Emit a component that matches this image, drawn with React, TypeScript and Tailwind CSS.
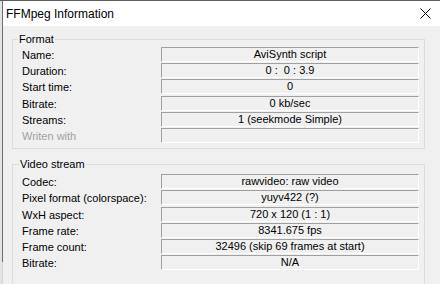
import React from "react";

type Row = { label: string; value: string; disabled?: boolean };

const formatRows: Row[] = [
  { label: "Name:", value: "AviSynth script" },
  { label: "Duration:", value: "0 :  0 : 3.9" },
  { label: "Start time:", value: "0" },
  { label: "Bitrate:", value: "0 kb/sec" },
  { label: "Streams:", value: "1 (seekmode Simple)" },
  { label: "Writen with", value: "", disabled: true },
];

const videoRows: Row[] = [
  { label: "Codec:", value: "rawvideo: raw video" },
  { label: "Pixel format (colorspace):", value: "yuyv422 (?)" },
  { label: "WxH aspect:", value: "720 x 120 (1 : 1)" },
  { label: "Frame rate:", value: "8341.675 fps" },
  { label: "Frame count:", value: "32496 (skip 69 frames at start)" },
  { label: "Bitrate:", value: "N/A" },
];

function InfoRow({ row }: { row: Row }) {
  return (
    <div className="flex h-[16.2px] items-start">
      <div
        className={
          "w-[139px] pt-[1px] leading-[15px] whitespace-nowrap " +
          (row.disabled ? "text-[#a0a0a0]" : "text-black")
        }
      >
        {row.label}
      </div>
      <div className="flex h-[15px] w-[258px] items-center justify-center border-t border-l border-b border-r border-t-[#a0a0a0] border-l-[#a0a0a0] border-b-white border-r-white leading-[13px] text-black whitespace-pre">
        {row.value}
      </div>
    </div>
  );
}

function Group({
  title,
  rows,
  className,
  legendClass,
}: {
  title: string;
  rows: Row[];
  className: string;
  legendClass: string;
}) {
  return (
    <div className={"relative border border-[#dcdcdc] pl-[9px] pr-[5px] " + className}>
      <span
        className={
          "absolute top-[-7px] bg-[#f0f0f0] px-[1px] leading-[13px] text-black " + legendClass
        }
      >
        {title}
      </span>
      <div className="flex flex-col">
        {rows.map((r, i) => (
          <InfoRow key={i} row={r} />
        ))}
      </div>
    </div>
  );
}

export default function App() {
  return (
    <div
      className="flex h-[284px] w-[440px] flex-col overflow-hidden bg-[#f0f0f0] text-[11px]"
      style={{ fontFamily: '"Liberation Sans", Arial, sans-serif' }}
    >
      <div className="h-[1px] w-full shrink-0 bg-[#5f5f5f]" />
      <div className="flex min-h-0 flex-1">
        <div className="w-[2px] shrink-0 bg-[#e4e4e4]" />
        <div className="flex w-[1px] shrink-0 flex-col">
          <div className="h-[261px] bg-[#6d6d6d]" />
          <div className="flex-1 bg-[#d6d6d6]" />
        </div>
        <div className="flex min-w-0 flex-1 flex-col">
          <div className="flex h-[25px] shrink-0 items-center justify-between bg-white pl-[3px]">
            <span className="text-[12px] leading-[16px] text-black">FFMpeg Information</span>
            <svg
              className="mr-[9px]"
              width="11"
              height="11"
              viewBox="0 0 11 11"
              fill="none"
              stroke="#000"
              strokeWidth="1"
            >
              <path d="M0.5 0.5 L10.5 10.5 M10.5 0.5 L0.5 10.5" />
            </svg>
          </div>
          <div className="flex flex-1 flex-col bg-[#f0f0f0] pl-[9px] pr-[15px]">
            <Group
              title="Format"
              rows={formatRows}
              className="mt-[13px] pt-[7px] pb-[4px]"
              legendClass="left-[5px]"
            />
            <Group
              title="Video stream"
              rows={videoRows}
              className="mt-[15px] pt-[9px] pb-[20px]"
              legendClass="left-[6px]"
            />
          </div>
        </div>
      </div>
    </div>
  );
}
